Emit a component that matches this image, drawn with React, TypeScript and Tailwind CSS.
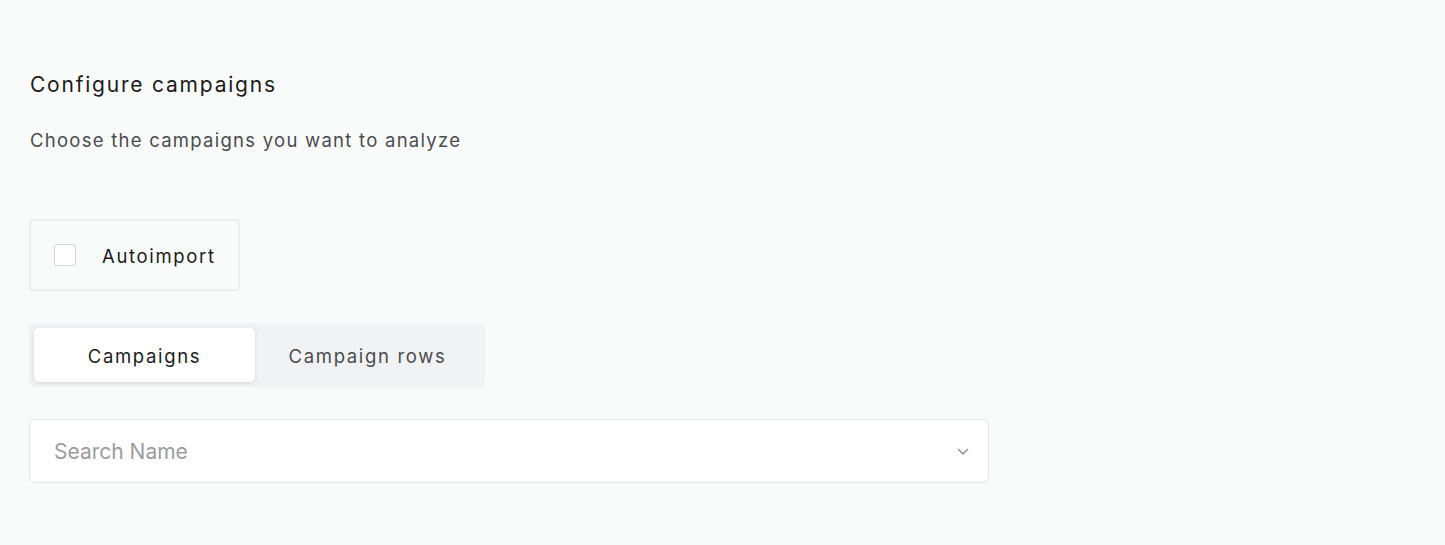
import { useState } from "react";

const tabs = ["Campaigns", "Campaign rows"];

export default function App() {
  const [active, setActive] = useState(0);
  const [auto, setAuto] = useState(false);

  return (
    <div
      className="min-h-[545px] w-full bg-[#f9fafa] px-[30px] pt-[70px] text-[#1c1c1c]"
      style={{ fontFamily: "Inter, 'Open Sans', sans-serif" }}
    >
      <h1 className="text-[21px] leading-[30px] font-normal tracking-[0.085em]">Configure campaigns</h1>
      <p className="mt-[25px] text-[18.5px] leading-[30px] tracking-[0.068em] text-[#4a4c50]">
        Choose the campaigns you want to analyze
      </p>

      {/* Autoimport */}
      <label className="mt-[64px] flex h-[72px] w-[211px] -ml-px cursor-pointer items-center gap-[26px] rounded-[4px] border-2 border-[#ededed] pl-[23px]">
        <input
          type="checkbox"
          checked={auto}
          onChange={() => setAuto(!auto)}
          className="h-[22px] w-[22px] appearance-none rounded-[3px] border border-[#d6d6d6] bg-white"
        />
        <span className="pt-[3px] text-[18.5px] tracking-[0.09em]">Autoimport</span>
      </label>

      {/* Tabs */}
      <div className="mt-[32px] -ml-px flex h-[64px] w-[456px] rounded-[6px] bg-[#f1f2f4] p-[5px]">
        {tabs.map((t, i) => (
          <button
            key={t}
            onClick={() => setActive(i)}
            className={
              i === active
                ? "w-[221px] rounded-[5px] bg-white pt-[3px] text-[18.5px] tracking-[0.09em] text-[#1c1c1c] shadow-[0_1px_4px_rgba(0,0,0,0.12)]"
                : "flex-1 rounded-[5px] pt-[3px] text-[18.5px] tracking-[0.09em] text-[#4a4c50]"
            }
          >
            {t}
          </button>
        ))}
      </div>

      {/* Search */}
      <div className="mt-[32px] -ml-px flex h-[64px] w-[960px] items-center rounded-[6px] border border-[#e4e5e6] bg-white pl-[24px] pr-[18px]">
        <input
          placeholder="Search Name"
          className="flex-1 bg-transparent pt-[2px] text-[21px] text-[#1c1c1c] outline-none placeholder:text-[#9b9c9e]"
        />
        <svg width="14" height="14" viewBox="0 0 14 14" fill="none">
          <path d="M2 5l5 5 5-5" stroke="#8d8e90" strokeWidth="1.4" />
        </svg>
      </div>
    </div>
  );
}
